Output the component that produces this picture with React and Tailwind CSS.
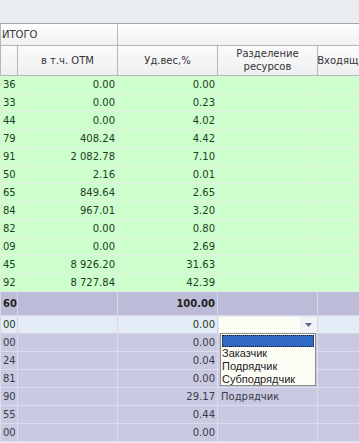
import React from "react";

const green = [
  ["36", "0.00", "0.00"],
  ["33", "0.00", "0.23"],
  ["44", "0.00", "4.02"],
  ["79", "408.24", "4.42"],
  ["91", "2 082.78", "7.10"],
  ["50", "2.16", "0.01"],
  ["65", "849.64", "2.65"],
  ["84", "967.01", "3.20"],
  ["82", "0.00", "0.80"],
  ["09", "0.00", "2.69"],
  ["45", "8 926.20", "31.63"],
  ["92", "8 727.84", "42.39"],
];

const lilac = [
  ["00", "", "0.00", ""],
  ["24", "", "0.04", ""],
  ["81", "", "0.00", ""],
  ["90", "", "29.17", "Подрядчик"],
  ["55", "", "0.44", ""],
  ["00", "", "0.00", ""],
];

function Row({ cells, bg, line, text, h = "h-[18px]", bold = false }) {
  return (
    <div className={`flex ${h} ${bg} ${text} ${bold ? "font-bold" : ""} border-b ${line}`}>
      <div className={`w-[18px] shrink-0 border-l border-r ${line} pl-[2px] flex items-center overflow-hidden`}>
        {cells[0]}
      </div>
      <div className={`w-[100px] shrink-0 border-r ${line} pr-[2px] flex items-center justify-end`}>
        {cells[1]}
      </div>
      <div className={`w-[100px] shrink-0 border-r ${line} pr-[2px] flex items-center justify-end`}>
        {cells[2]}
      </div>
      <div className={`w-[100px] shrink-0 border-r ${line} pl-[3px] flex items-center`}>
        {cells[3]}
      </div>
      <div className={`w-[100px] shrink-0 border-r ${line}`}></div>
    </div>
  );
}

export default function App() {
  return (
    <div
      className="relative w-[359px] h-[443px] overflow-hidden bg-[#e9ecf0] text-[10px] leading-none"
      style={{ fontFamily: '"DejaVu Sans", sans-serif' }}
    >
      {/* top band */}
      <div className="h-[24px] border-b border-[#a3a6ab]"></div>

      {/* group header */}
      <div className="flex h-[22px] bg-gradient-to-b from-[#ffffff] to-[#f0f1f3] text-[#333] border-b border-[#b4b7bc]">
        <div className="w-[118px] shrink-0 border-l border-r border-[#b4b7bc] flex items-center pl-[1px]">
          ИТОГО
        </div>
        <div className="w-[400px] shrink-0"></div>
      </div>

      {/* column header */}
      <div className="flex h-[30px] bg-gradient-to-b from-[#fbfbfc] to-[#eeeff1] text-[#333] border-b border-[#b4b7bc]">
        <div className="w-[18px] shrink-0 border-l border-r border-[#b4b7bc]"></div>
        <div className="w-[100px] shrink-0 border-r border-[#b4b7bc] flex items-center justify-center">
          в т.ч. ОТМ
        </div>
        <div className="w-[100px] shrink-0 border-r border-[#b4b7bc] flex items-center justify-center">
          Уд.вес,%
        </div>
        <div className="w-[100px] shrink-0 border-r border-[#b4b7bc] flex flex-col items-center justify-center gap-[3px]">
          <span>Разделение</span>
          <span>ресурсов</span>
        </div>
        <div className="w-[100px] shrink-0 border-r border-[#b4b7bc] flex items-center justify-center whitespace-nowrap">
          Входящие ресурсы
        </div>
      </div>

      {/* green rows */}
      {green.map((r, i) => (
        <Row
          key={i}
          cells={[r[0], r[1], r[2], ""]}
          bg="bg-[#ccffcc]"
          line="border-[#e2f0e2]"
          text="text-[#1f3d1f]"
        />
      ))}

      {/* total */}
      <Row
        cells={["60", "", "100.00", ""]}
        bg="bg-[#bcbcd8]"
        line="border-[#d6d6e8]"
        text="text-[#222]"
        h="h-[24px]"
        bold
      />

      {/* selected row */}
      <Row
        cells={["00", "", "0.00", ""]}
        bg="bg-[#e3ecf6]"
        line="border-[#d6d6e8]"
        text="text-[#1f3d1f]"
      />

      {lilac.map((r, i) => (
        <Row
          key={i}
          cells={r}
          bg="bg-[#c9c9e1]"
          line="border-[#dcdcec]"
          text="text-[#3a3a48]"
        />
      ))}

      {/* combo box */}
      <div className="absolute left-[219px] top-[317px] w-[98px] h-[16px] flex bg-[#fdfdf6]">
        <div className="flex-1"></div>
        <div className="w-[17px] flex items-center justify-center bg-[#f1f2f5]">
          <svg width="7" height="4" viewBox="0 0 7 4">
            <path d="M0 0h7L3.5 4z" fill="#5b6b8c" />
          </svg>
        </div>
      </div>

      {/* dropdown list */}
      <div
        className="absolute left-[220px] top-[333px] w-[96px] h-[53px] border border-[#8c8c8c] bg-[#fdfdf6] text-[11px] text-[#222] leading-[13px]"
        style={{ fontFamily: '"Liberation Sans", sans-serif' }}
      >
        <div className="h-[12px] mx-[1px] mt-[1px] bg-[#3169c6] border border-dotted border-[#1a1a1a]"></div>
        <div className="pl-[1px]">Заказчик</div>
        <div className="pl-[1px]">Подрядчик</div>
        <div className="pl-[1px]">Субподрядчик</div>
      </div>
    </div>
  );
}
